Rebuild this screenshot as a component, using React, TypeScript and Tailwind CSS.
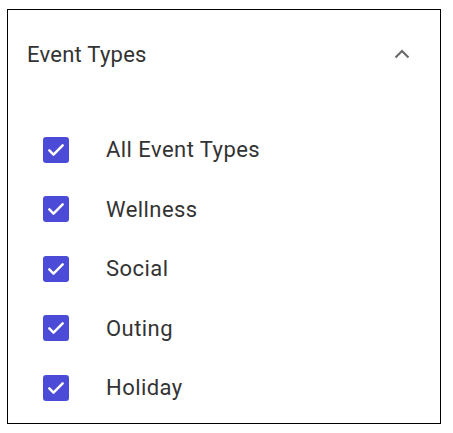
const items = ["All Event Types", "Wellness", "Social", "Outing", "Holiday"];

function CheckIcon() {
  return (
    <span className="flex h-[26px] w-[26px] items-center justify-center rounded-[3px] bg-[#4b4bd8]">
      <svg width="20" height="20" viewBox="0 0 24 24" fill="none">
        <path d="M4 12.5l5 5L20 6.5" stroke="white" strokeWidth="3" strokeLinecap="round" strokeLinejoin="round" />
      </svg>
    </span>
  );
}

export default function App() {
  return (
    <div className="h-[433px] w-[453px] bg-white pl-[7px] pt-[9px]" style={{ fontFamily: "Roboto, 'Liberation Sans', sans-serif" }}>
      <div className="h-[415px] w-[434px] border border-black">
        <div className="flex h-[88px] items-center justify-between pl-[19px] pr-[30px]">
          <h2 className="text-[22px] tracking-[0.25px] text-[#333333]">Event Types</h2>
          <svg width="16" height="10" viewBox="0 0 16 10" fill="none">
            <path d="M1.5 8.5L8 2l6.5 6.5" stroke="#6b6b6b" strokeWidth="2.2" />
          </svg>
        </div>
        <ul className="mt-[22px] flex flex-col">
          {items.map((label) => (
            <li key={label} className="flex h-[59.5px] items-center pl-[35px]">
              <CheckIcon />
              <span className="ml-[37px] text-[22px] tracking-[0.45px] text-[#333333]">{label}</span>
            </li>
          ))}
        </ul>
      </div>
    </div>
  );
}
